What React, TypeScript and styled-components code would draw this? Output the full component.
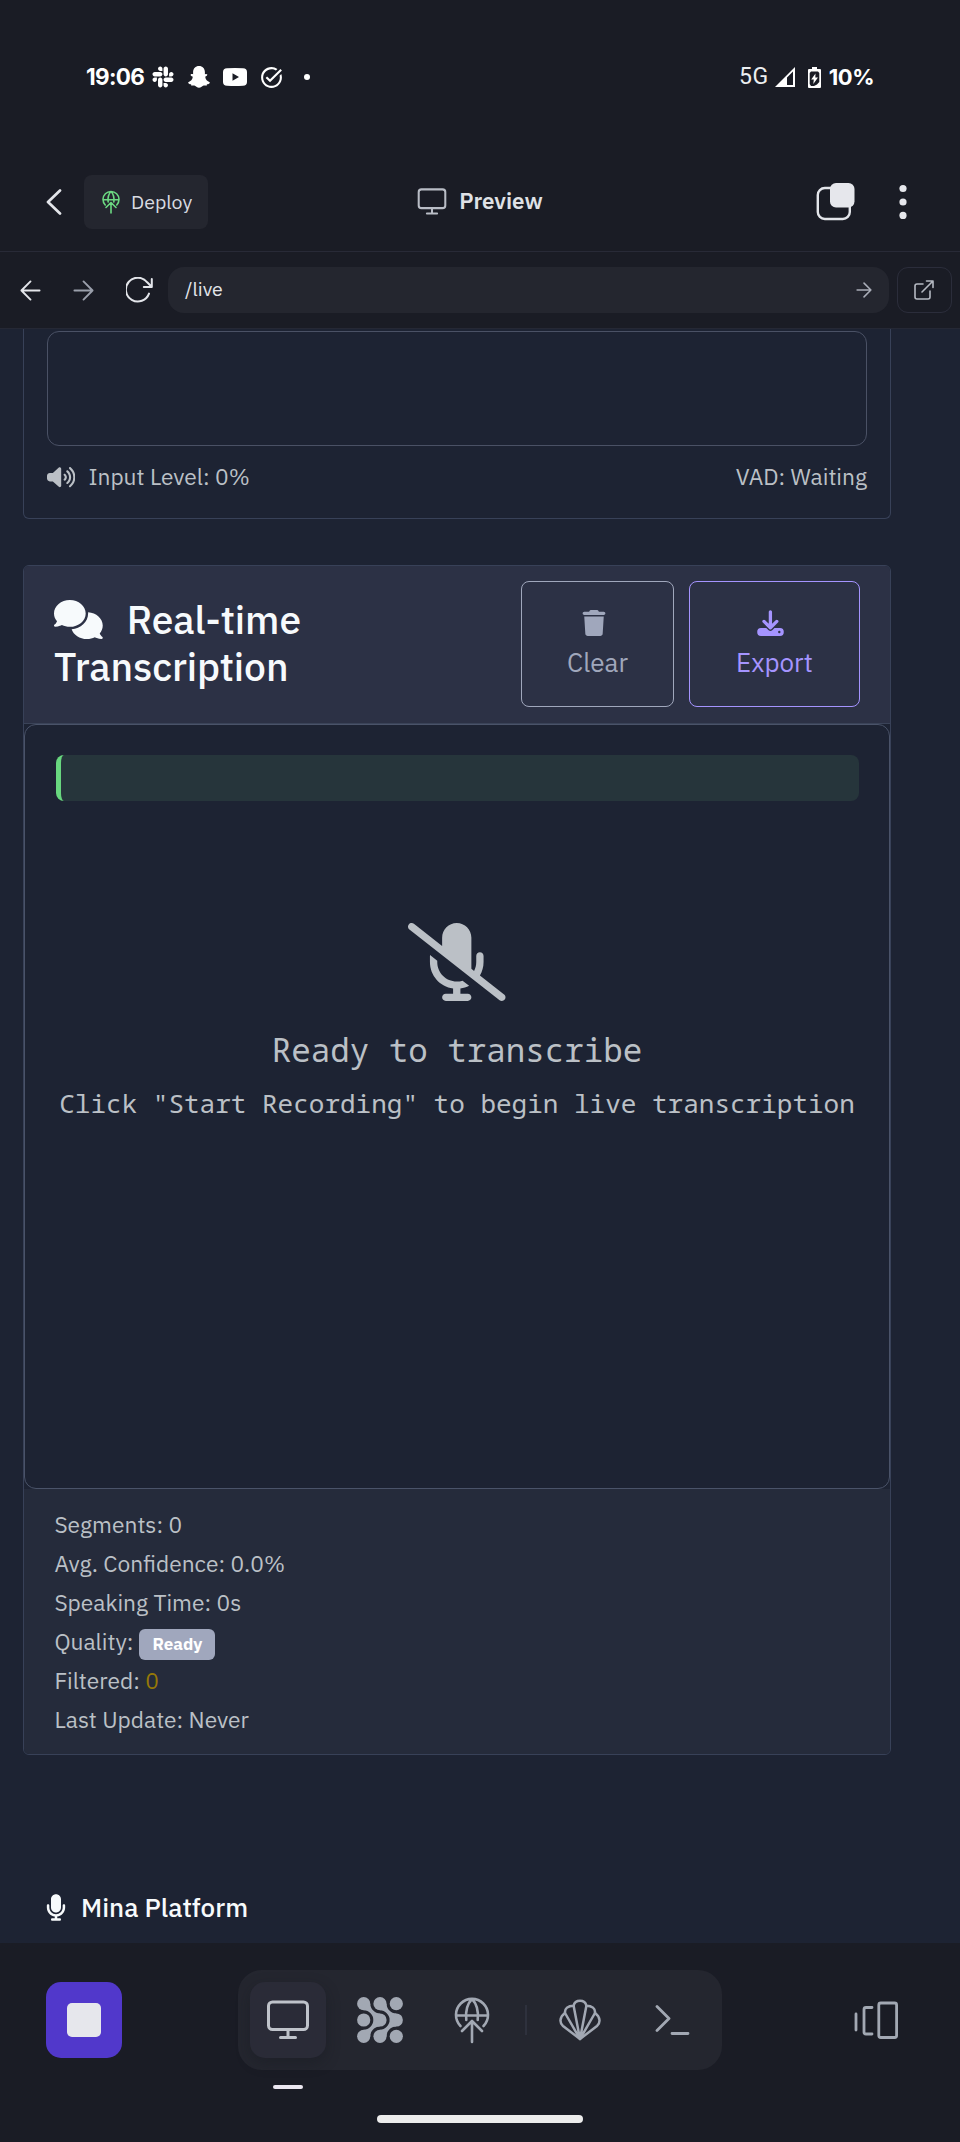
import React from 'react';
import styled, { createGlobalStyle } from 'styled-components';
import { FaComments, FaMicrophone, FaMicrophoneSlash, FaSlack, FaTrash, FaVolumeHigh } from 'react-icons/fa6';
import { MdTaskAlt } from 'react-icons/md';

const sans = '"IBM Plex Sans", "Noto Sans", sans-serif';
const mono = '"Noto Sans Mono", "DejaVu Sans Mono", monospace';

const GlobalStyle = createGlobalStyle`
  * { box-sizing: border-box; }
  body { margin: 0; background: #1a1c25; }
  svg { display: block; flex: none; }
  button { font-family: inherit; }
`;

const Screen = styled.div`
  display: flex;
  flex-direction: column;
  width: 960px;
  height: 2142px;
  overflow: hidden;
  background: #1a1c25;
  color: #e3e5ea;
  font-family: ${sans};
`;

const StatusBar = styled.header`
  display: flex;
  justify-content: space-between;
  align-items: center;
  height: 154px;
  flex: none;
  padding: 0 86px;
  color: #fff;
`;

const StatusGroup = styled.div`
  display: flex;
  align-items: center;
`;

const StatusIcon = styled.span<{ $gap: number }>`
  display: flex;
  margin-left: ${(p) => p.$gap}px;
`;

const Clock = styled.span`
  font: 700 22.5px/28px Inter, sans-serif;
  letter-spacing: -0.7px;
`;

const Network = styled.span`
  font: 400 23px/28px Roboto, sans-serif;
  letter-spacing: 0.6px;
  color: #eceef0;
`;

const Battery = styled.span`
  margin-left: 8px;
  font: 700 22px/28px Inter, sans-serif;
  letter-spacing: -0.5px;
`;

const AppBar = styled.nav`
  display: grid;
  grid-template-columns: 1fr auto 1fr;
  align-items: center;
  height: 98px;
  flex: none;
  padding: 0 53px 1px 46px;
  border-bottom: 1px solid #282a37;
`;

const BarSide = styled.div<{ $end?: boolean }>`
  display: flex;
  align-items: center;
  justify-content: ${(p) => (p.$end ? 'flex-end' : 'flex-start')};
  gap: ${(p) => (p.$end ? 44 : 22)}px;
`;

const DeployButton = styled.button`
  display: flex;
  align-items: center;
  gap: 11px;
  width: 124px;
  height: 54px;
  padding: 0 0 1px 18px;
  border: 0;
  border-radius: 8px;
  background: #24262f;
  color: #d9dbe1;
  font-size: 19.6px;
`;

const DeployIcon = styled.span`
  color: #6cd982;
`;

const PageTitle = styled.h1`
  display: flex;
  align-items: center;
  gap: 12px;
  margin: 0 0 0 7px;
  color: #dfe1e6;
  font-size: 22.3px;
  line-height: 30px;
  font-weight: 600;
`;

const PageTitleText = styled.span`
  padding-bottom: 2px;
`;

const MutedIcon = styled.span`
  color: #b9bdc6;
`;

const UrlBar = styled.div`
  display: flex;
  align-items: center;
  height: 77px;
  flex: none;
  padding: 0 8px 0 20px;
  border-bottom: 1px solid #252835;
`;

const NavIcons = styled.div`
  display: flex;
  align-items: center;
  gap: 32px;
  width: 148px;
`;

const UrlField = styled.div`
  display: flex;
  align-items: center;
  justify-content: space-between;
  flex: 1;
  height: 46px;
  padding: 0 17px;
  border-radius: 16px;
  background: #24262f;
  font-size: 19.5px;
`;

const UrlText = styled.span`
  padding-bottom: 3px;
`;

const OpenButton = styled.button`
  display: grid;
  place-items: center;
  width: 55px;
  height: 46px;
  margin-left: 8px;
  padding: 0 1px 0 0;
  border: 1px solid #2b2d3b;
  border-radius: 11px;
  background: transparent;
`;

const Page = styled.main`
  display: flex;
  flex-direction: column;
  height: 1614px;
  flex: none;
  padding: 0 69px 0 23px;
  background: #1d2333;
  color: #bbc0c6;
`;

const LevelCard = styled.section`
  height: 190px;
  flex: none;
  padding: 2px 23px 0;
  border: 1px solid #384158;
  border-top: 0;
  border-radius: 0 0 6px 6px;
`;

const Waveform = styled.div`
  height: 115px;
  border: 1px solid #4a5165;
  border-radius: 12px;
`;

const LevelRow = styled.div`
  display: flex;
  align-items: center;
  justify-content: space-between;
  margin-top: 14px;
  font-size: 22.75px;
  line-height: 34px;
`;

const LevelLabel = styled.span`
  display: flex;
  align-items: center;
  gap: 13px;
`;

const TranscriptCard = styled.section`
  display: flex;
  flex-direction: column;
  height: 1190px;
  flex: none;
  margin-top: 46px;
  border: 1px solid #384158;
  border-radius: 6px;
  overflow: hidden;
`;

const CardHeader = styled.div`
  display: flex;
  align-items: center;
  justify-content: space-between;
  height: 158px;
  flex: none;
  padding: 0 30px 2px;
  border-bottom: 1px solid #3a4358;
  background: #2c3145;
`;

const CardTitle = styled.h2`
  width: 300px;
  margin: 0;
  color: #f7fafc;
  font-size: 39px;
  line-height: 46.8px;
  font-weight: 500;
  letter-spacing: -0.1px;

  svg {
    display: inline-block;
    width: 48.75px;
    height: 39px;
    margin-right: 15px;
    vertical-align: -5.5px;
  }
`;

const Actions = styled.div`
  display: flex;
  gap: 15px;
`;

const ActionButton = styled.button<{ $color: string; $width: number }>`
  display: flex;
  flex-direction: column;
  align-items: center;
  width: ${(p) => p.$width}px;
  height: 126px;
  padding: 22px 0 0;
  border: 1px solid ${(p) => p.$color};
  border-radius: 8px;
  background: transparent;
  color: ${(p) => p.$color};
  font-size: 26px;
  line-height: 39px;

  svg { margin: 6px 8px 7px 0; }
`;

const Transcript = styled.div`
  display: flex;
  flex-direction: column;
  align-items: center;
  height: 765px;
  flex: none;
  padding: 30px;
  border: 1px solid #4a5369;
  border-radius: 12px;
  font-family: ${mono};
  white-space: nowrap;
`;

const InterimLine = styled.div`
  align-self: stretch;
  height: 46px;
  margin: 0 0 122px 1px;
  border-left: 5px solid #68d77f;
  border-radius: 8px;
  background: #26353b;
`;

const MicOff = styled(FaMicrophoneSlash)`
  width: 97.5px;
  height: 78px;
`;

const ReadyTitle = styled.p`
  margin: 25px 0 0;
  font-size: 32.5px;
  line-height: 48px;
`;

const ReadyHint = styled.p`
  margin: 10px 0 0;
  font-size: 26px;
  line-height: 39px;
`;

const Stats = styled.div`
  flex: 1;
  padding: 16px 30.4px;
  background: #252b3b;
  font-size: 22.75px;
  line-height: 39px;
`;

const Stat = styled.div`
  display: flex;
  align-items: center;
  height: 39px;
  white-space: pre;
`;

const Badge = styled.span`
  display: grid;
  place-items: center;
  width: 76px;
  height: 31px;
  margin: 5px 0 0 0.6px;
  border-radius: 6px;
  background: #a0a7bd;
  color: #fff;
  font-size: 17px;
  line-height: 17px;
  font-weight: 700;
`;

const Warn = styled.span`
  color: #967808;
`;

const Brand = styled.footer`
  display: flex;
  align-items: center;
  gap: 15px;
  margin: 133px 0 0 23px;
  color: #f7fafc;
  font-size: 26px;
  line-height: 39px;
  font-weight: 500;
`;

const BrandMic = styled(FaMicrophone)`
  width: 20px;
  height: 27px;
`;

const Dock = styled.div`
  display: flex;
  align-items: flex-start;
  justify-content: space-between;
  height: 172px;
  flex: none;
  padding: 27px 62px 0 46px;
`;

const StopButton = styled.button`
  display: grid;
  place-items: center;
  width: 76px;
  height: 76px;
  margin-top: 12px;
  padding: 0;
  border: 0;
  border-radius: 15px;
  background: #5138cb;
`;

const StopMark = styled.span`
  width: 34px;
  height: 34px;
  border-radius: 5px;
  background: #e6e7ec;
`;

const Tabs = styled.div`
  display: flex;
  align-items: center;
  gap: 16px;
  height: 100px;
  margin-left: -17px;
  padding: 0 12px;
  border-radius: 24px;
  background: #24262f;
  color: #a2a8b3;
`;

const Tab = styled.button<{ $active?: boolean }>`
  position: relative;
  display: grid;
  place-items: center;
  width: 76px;
  height: 76px;
  padding: 0;
  border: 0;
  border-radius: 15px;
  background: ${(p) => (p.$active ? '#2a2b37' : 'transparent')};
  box-shadow: ${(p) => (p.$active ? '0 5px 14px rgba(20, 22, 29, 0.35)' : 'none')};
  color: ${(p) => (p.$active ? '#bfc3ca' : 'inherit')};
`;

const ActiveMark = styled.span`
  position: absolute;
  left: 23px;
  top: 103px;
  width: 30px;
  height: 4px;
  border-radius: 2px;
  background: #ebe7f1;
`;

const TabDivider = styled.span`
  width: 2px;
  height: 30px;
  margin: 0 -1px;
  background: #2e313d;
`;

const PanelIcon = styled.div`
  margin-top: 31px;
  color: #a2a8b3;
`;

const HomeBar = styled.div`
  width: 206px;
  height: 8px;
  flex: none;
  margin: 0 auto;
  border-radius: 4px;
  background: #ececec;
`;

const line = { fill: 'none', stroke: 'currentColor', strokeLinecap: 'round', strokeLinejoin: 'round' } as const;

const Ghost = () => (
  <svg width="22" height="22" viewBox="0 0 22 22">
    <path fill="#fff" d="M11 0C14.5 0 16.9 2.6 16.9 6V8.2Q18.6 7.5 19.3 8.5 19.6 9.6 17.2 10.8C17.6 13.6 19.2 15.4 21.7 16.2 22.2 17.4 20.8 18 19 18.3L18.5 19.7C16 19.3 15 19.6 13.6 20.7Q11 22.6 8.4 20.7C7 19.6 6 19.3 3.5 19.7L3 18.3C1.2 18-.2 17.4.3 16.2 2.8 15.4 4.4 13.6 4.8 10.8 2.4 9.6 2.4 9 2.7 8.5 3.4 7.5 5.1 8.2 5.1 8.2V6C5.1 2.6 7.5 0 11 0Z" />
  </svg>
);

const Youtube = () => (
  <svg width="24" height="18" viewBox="0 0 24 18">
    <path fill="#fff" fillRule="evenodd" d="M4 .2Q12-.2 20 .2Q24 .4 24 4V14Q24 17.6 20 17.8Q12 18.2 4 17.8Q0 17.6 0 14V4Q0 .4 4 .2ZM9.5 5.2V12.8L16 9Z" />
  </svg>
);

const Signal = () => (
  <svg width="20" height="20" viewBox="0 0 20 20">
    <path fill="#fff" fillRule="evenodd" d="M0 20 20 0V20ZM12 10.5V18H18V4.5Z" />
  </svg>
);

const BatteryIcon = () => (
  <svg width="13" height="21" viewBox="0 0 13 21">
    <path fill="#fff" d="M4 0H9V2H12Q13 2 13 3V20Q13 21 12 21H1Q0 21 0 20V3Q0 2 1 2H4Z" />
    <path fill="#1a1c25" d="M3 4.5H10L11.3 6V15L9 17.5 6 19H3L1.7 17V6Z" />
    <path fill="#fff" d="M7.5 6.5 3.2 12.4H5.8L5.3 17 10 10.6H7.3Z" />
  </svg>
);

const Monitor = ({ w, sw }: { w: number; sw: number }) => (
  <svg width={w} height={(w * 40) / 44} viewBox="0 0 44 40" {...line} strokeWidth={sw}>
    <rect x="2.5" y="2" width="39" height="27.5" rx="4" />
    <path d="M22 30V37M14.5 37.5H29.5" />
  </svg>
);

const GlobeUp = ({ w, sw }: { w: number; sw: number }) => (
  <svg width={w} height={(w * 48) / 36} viewBox="0 0 36 48" {...line} strokeWidth={sw}>
    <path d="M6.5 30A16 16 0 1 1 29.5 30M2.5 19.5H33.5M18 3C13.5 7.5 11.3 15 12.3 24M18 3C22.5 7.5 24.7 15 23.7 24" />
    <path d="M18 46V25M8 35 18 25 28 35" />
  </svg>
);

const Agents = () => (
  <svg width="46" height="46" viewBox="0 0 46 46" fill="currentColor">
    {[6.7, 23, 39.3].map((y) => [6.7, 23, 39.3].map((x) => <circle key={`${x}-${y}`} cx={x} cy={y} r="6.6" />))}
    <path d="M13.3 6.7C13.3 12 18 16.4 23 16.4L16.4 23C16.4 18 12 13.3 6.7 13.3Z" />
    <path d="M29.6 6.7C29.6 12 34 16.4 39.3 16.4L32.7 23C32.7 18 28 13.3 23 13.3Z" />
    <path d="M6.7 32.7C12 32.7 16.4 28 16.4 23L23 29.6C18 29.6 13.3 34 13.3 39.3Z" />
    <path d="M23 32.7C28 32.7 32.7 28 32.7 23L39.3 29.6C34 29.6 29.6 34 29.6 39.3Z" />
  </svg>
);

const Shell = () => (
  <svg width="42" height="42" viewBox="0 0 42 42" {...line} strokeWidth="2.5">
    <path d="M21 40 4 27C.3 24 .5 18 6 14 5.5 9.5 9 6.7 14.6 6.7 16 .2 26 .2 27.4 6.7 33 6.7 36.5 9.5 36 14 41.5 18 41.7 24 38 27Z" />
    <path d="M21 40 6 14M21 40 14.6 6.7M21 40 27.4 6.7M21 40 36 14" />
  </svg>
);

const Terminal = () => (
  <svg width="36" height="32" viewBox="0 0 36 32" {...line} strokeWidth="2.8">
    <path d="M3 2.5 15 14.5 3 26.5M18 29.5H34" />
  </svg>
);

const Panels = () => (
  <svg width="44" height="38" viewBox="0 0 44 38" {...line} strokeWidth="2.8">
    <path d="M2 13V29M18 6.5H12Q10 6.5 10 8.5V31Q10 33 12 33H18" />
    <rect x="24.8" y="2" width="17.8" height="34.5" rx="2" />
  </svg>
);

const Download = () => (
  <svg width="27" height="26" viewBox="0 0 27 26">
    <path d="M13.4 1.8V16M7 11.4 13.4 17.7 19.8 11.4" {...line} strokeWidth="3.3" />
    <path fill="currentColor" fillRule="evenodd" d="M4 18H9.3L11.6 20.3Q13.4 21.9 15.2 20.3L17.5 18H23Q26.8 18 26.8 22T23 26H4Q.2 26 .2 22T4 18ZM22.3 20.8A1.2 1.2 0 1 0 22.3 23.2 1.2 1.2 0 1 0 22.3 20.8Z" />
  </svg>
);

const Arrow = ({ size, back, color }: { size: number; back?: boolean; color: string }) => (
  <svg width={size} height={size} viewBox="0 0 22 22" {...line} stroke={color} strokeWidth={size > 20 ? 2 : 2.1}>
    {back ? <path d="M20.5 11H1.5M11 1.5 1.5 11 11 20.5" /> : <path d="M1.5 11H20.5M11 1.5 20.5 11 11 20.5" />}
  </svg>
);

export default function App() {
  return (
    <Screen>
      <GlobalStyle />
      <StatusBar>
        <StatusGroup>
          <Clock>19:06</Clock>
          <StatusIcon $gap={7}><FaSlack size={24} /></StatusIcon>
          <StatusIcon $gap={13}><Ghost /></StatusIcon>
          <StatusIcon $gap={13}><Youtube /></StatusIcon>
          <StatusIcon $gap={12}><MdTaskAlt size={25} /></StatusIcon>
          <StatusIcon $gap={20}>
            <svg width="6" height="6" viewBox="0 0 6 6"><circle cx="3" cy="3" r="3" fill="#fff" /></svg>
          </StatusIcon>
        </StatusGroup>
        <StatusGroup>
          <Network>5G</Network>
          <StatusIcon $gap={6}><Signal /></StatusIcon>
          <StatusIcon $gap={13}><BatteryIcon /></StatusIcon>
          <Battery>10%</Battery>
        </StatusGroup>
      </StatusBar>

      <AppBar>
        <BarSide>
          <svg width="16" height="26" viewBox="0 0 16 26" {...line} strokeWidth="2.7"><path d="M14 1.5 2 13 14 24.5" /></svg>
          <DeployButton>
            <DeployIcon><GlobeUp w={18} sw={3.2} /></DeployIcon>
            Deploy
          </DeployButton>
        </BarSide>
        <PageTitle>
          <MutedIcon><Monitor w={30} sw={3} /></MutedIcon>
          <PageTitleText>Preview</PageTitleText>
        </PageTitle>
        <BarSide $end>
          <svg width="39" height="38" viewBox="0 0 39 38">
            <rect x="1.8" y="5" width="32" height="31" rx="7" {...line} strokeWidth="2.4" />
            <rect x="14" y="0" width="24.5" height="24.5" rx="6" fill="#e6e7ec" />
          </svg>
          <svg width="8" height="36" viewBox="0 0 8 36" fill="#e6e7ec">
            <circle cx="4" cy="4.5" r="3.6" /><circle cx="4" cy="18" r="3.6" /><circle cx="4" cy="31.4" r="3.6" />
          </svg>
        </BarSide>
      </AppBar>

      <UrlBar>
        <NavIcons>
          <Arrow size={21} back color="#e3e5ea" />
          <Arrow size={21} color="#9a9fab" />
          <svg width="28" height="26" viewBox="0 0 28 26" {...line} strokeWidth="2">
            <path d="M23 16.6A11.9 11.9 0 1 1 21.2 5.3L25.6 9.8M25.8 2V10H17.8" />
          </svg>
        </NavIcons>
        <UrlField>
          <UrlText>/live</UrlText>
          <Arrow size={16} color="#a9adb8" />
        </UrlField>
        <OpenButton>
          <svg width="20" height="20" viewBox="0 0 20 20" {...line} stroke="#b5b9c2" strokeWidth="1.6">
            <path d="M9 4H3Q1 4 1 6V17Q1 19 3 19H14Q16 19 16 17V11M8 12 19 1M12.5 1H19V7.5" />
          </svg>
        </OpenButton>
      </UrlBar>

      <Page>
        <LevelCard>
          <Waveform />
          <LevelRow>
            <LevelLabel><FaVolumeHigh size={28.4} />Input Level: 0%</LevelLabel>
            <span>VAD: Waiting</span>
          </LevelRow>
        </LevelCard>

        <TranscriptCard>
          <CardHeader>
            <CardTitle><FaComments /> Real-time Transcription</CardTitle>
            <Actions>
              <ActionButton $color="#a0a7bc" $width={153}><FaTrash size={26} />Clear</ActionButton>
              <ActionButton $color="#a594ff" $width={171}><Download />Export</ActionButton>
            </Actions>
          </CardHeader>
          <Transcript>
            <InterimLine />
            <MicOff />
            <ReadyTitle>Ready to transcribe</ReadyTitle>
            <ReadyHint>Click "Start Recording" to begin live transcription</ReadyHint>
          </Transcript>
          <Stats>
            <Stat>Segments: 0</Stat>
            <Stat>Avg. Confidence: 0.0%</Stat>
            <Stat>Speaking Time: 0s</Stat>
            <Stat>Quality: <Badge>Ready</Badge></Stat>
            <Stat>Filtered: <Warn>0</Warn></Stat>
            <Stat>Last Update: Never</Stat>
          </Stats>
        </TranscriptCard>

        <Brand><BrandMic />Mina Platform</Brand>
      </Page>

      <Dock>
        <StopButton><StopMark /></StopButton>
        <Tabs>
          <Tab $active><Monitor w={44} sw={3} /><ActiveMark /></Tab>
          <Tab><Agents /></Tab>
          <Tab><GlobeUp w={36} sw={2.6} /></Tab>
          <TabDivider />
          <Tab><Shell /></Tab>
          <Tab><Terminal /></Tab>
        </Tabs>
        <PanelIcon><Panels /></PanelIcon>
      </Dock>
      <HomeBar />
    </Screen>
  );
}
